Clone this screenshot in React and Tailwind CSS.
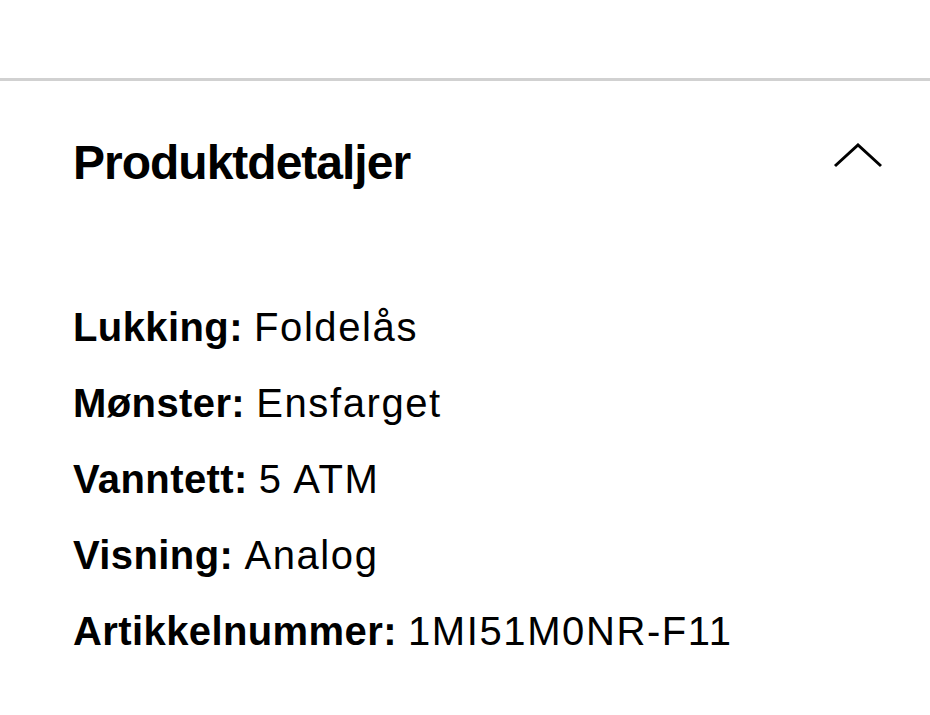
export default function App() {
  const details = [
    { label: "Lukking:", value: "Foldelås" },
    { label: "Mønster:", value: "Ensfarget" },
    { label: "Vanntett:", value: "5 ATM" },
    { label: "Visning:", value: "Analog" },
    { label: "Artikkelnummer:", value: "1MI51M0NR-F11" },
  ];

  return (
    <div className="w-[930px] h-[715px] bg-white text-black font-['Liberation_Sans',Arial,sans-serif] overflow-hidden">
      <div className="h-[78px]" />
      <div className="h-[3px] bg-[#d1d1d1]" />

      <section className="pl-[73px] pr-[47px]">
        <div className="flex items-start justify-between pt-[58px]">
          <h2 className="text-[48px] font-bold leading-[48px] tracking-[-1px]">Produktdetaljer</h2>
          <svg width="50" height="26" viewBox="0 0 50 26" className="mt-[4px]" fill="none">
            <path d="M2 23 L25 2 L48 23" stroke="#000" strokeWidth="3" strokeLinejoin="miter" />
          </svg>
        </div>

        <div className="mt-[102px]">
          {details.map((d) => (
            <p key={d.label} className="text-[40px] leading-[76px]">
              <span className="font-bold tracking-[0.4px]">{d.label}</span>{" "}
              <span className="tracking-[1.6px]">{d.value}</span>
            </p>
          ))}
        </div>
      </section>
    </div>
  );
}
